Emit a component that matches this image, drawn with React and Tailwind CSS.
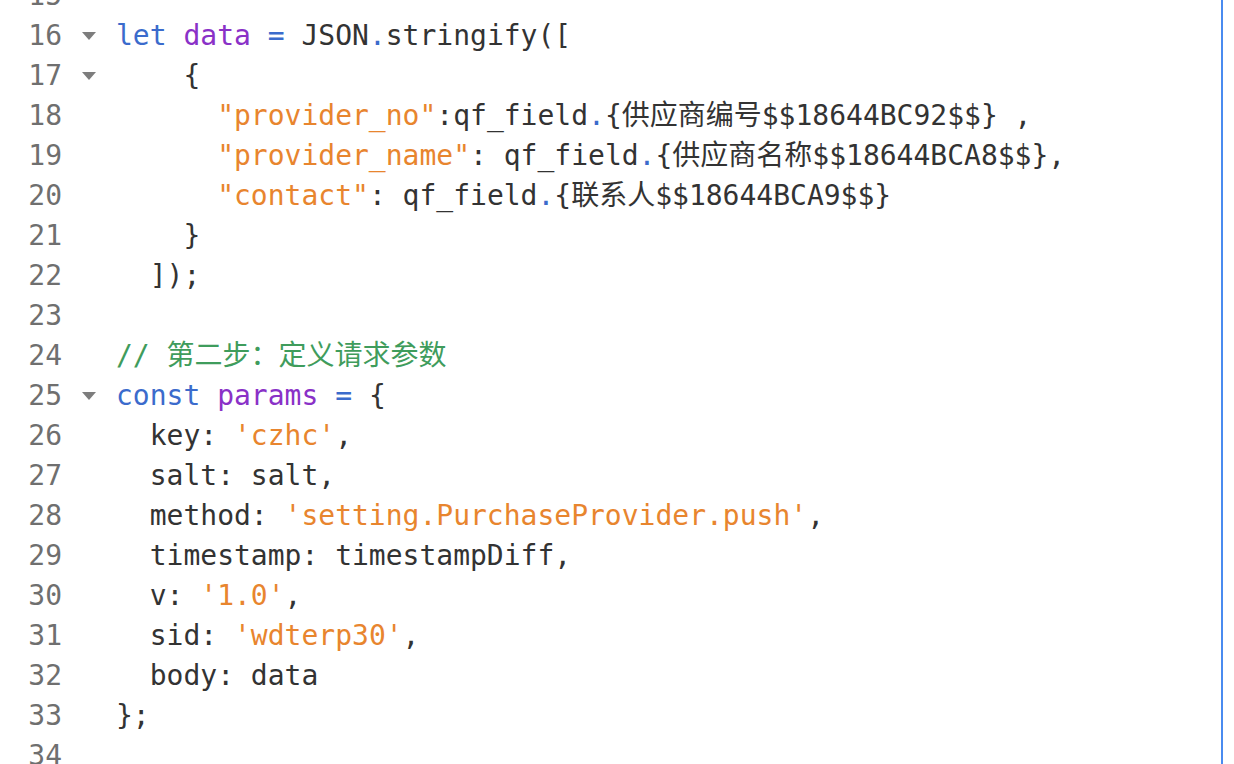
import React from "react";

const K = ({ children }) => <span className="text-[#3b6bcc]">{children}</span>;
const V = ({ children }) => <span className="text-[#8a31c7]">{children}</span>;
const S = ({ children }) => <span className="text-[#e8852e]">{children}</span>;
const C = ({ children }) => <span className="text-[#3f9c5c]">{children}</span>;

const lines = [
  { n: 15, fold: false, code: null },
  { n: 16, fold: true, code: (<><K>let</K> <V>data</V> <K>=</K> JSON<K>.</K>stringify([</>) },
  { n: 17, fold: true, code: (<>{"    {"}</>) },
  { n: 18, fold: false, code: (<>{"      "}<S>"provider_no"</S>:qf_field<K>.</K>{"{供应商编号$$18644BC92$$} ,"}</>) },
  { n: 19, fold: false, code: (<>{"      "}<S>"provider_name"</S>: qf_field<K>.</K>{"{供应商名称$$18644BCA8$$},"}</>) },
  { n: 20, fold: false, code: (<>{"      "}<S>"contact"</S>: qf_field<K>.</K>{"{联系人$$18644BCA9$$}"}</>) },
  { n: 21, fold: false, code: (<>{"    }"}</>) },
  { n: 22, fold: false, code: (<>{"  ]);"}</>) },
  { n: 23, fold: false, code: null },
  { n: 24, fold: false, code: (<C>// 第二步：定义请求参数</C>) },
  { n: 25, fold: true, code: (<><K>const</K> <V>params</V> <K>=</K> {"{"}</>) },
  { n: 26, fold: false, code: (<>{"  key: "}<S>'czhc'</S>,</>) },
  { n: 27, fold: false, code: (<>{"  salt: salt,"}</>) },
  { n: 28, fold: false, code: (<>{"  method: "}<S>'setting.PurchaseProvider.push'</S>,</>) },
  { n: 29, fold: false, code: (<>{"  timestamp: timestampDiff,"}</>) },
  { n: 30, fold: false, code: (<>{"  v: "}<S>'1.0'</S>,</>) },
  { n: 31, fold: false, code: (<>{"  sid: "}<S>'wdterp30'</S>,</>) },
  { n: 32, fold: false, code: (<>{"  body: data"}</>) },
  { n: 33, fold: false, code: (<>{"};"}</>) },
  { n: 34, fold: false, code: null },
];

export default function App() {
  return (
    <div className="w-[1234px] h-[764px] overflow-hidden bg-white flex">
      <div className="w-[1221px] h-full overflow-hidden bg-white">
        <div
          className="-mt-[24px] text-[28px] leading-[40px] text-[#333333]"
          style={{ fontFamily: '"DejaVu Sans Mono", "Noto Sans CJK SC", monospace' }}
        >
          {lines.map((l) => (
            <div key={l.n} className="flex h-[40px] items-center">
              <div className="w-[62px] text-right text-[#6f6f6f]">{l.n}</div>
              <div className="w-[54px] h-full flex items-center pl-[20px]">
                {l.fold && (
                  <svg width="14" height="8" viewBox="0 0 14 8">
                    <path d="M0 0 L14 0 L7 8 Z" fill="#7d7d7d" />
                  </svg>
                )}
              </div>
              <div className="whitespace-pre">{l.code}</div>
            </div>
          ))}
        </div>
      </div>
      <div className="w-[2px] h-full bg-[#4a8bf0]" />
      <div className="flex-1 h-full bg-white" />
    </div>
  );
}
